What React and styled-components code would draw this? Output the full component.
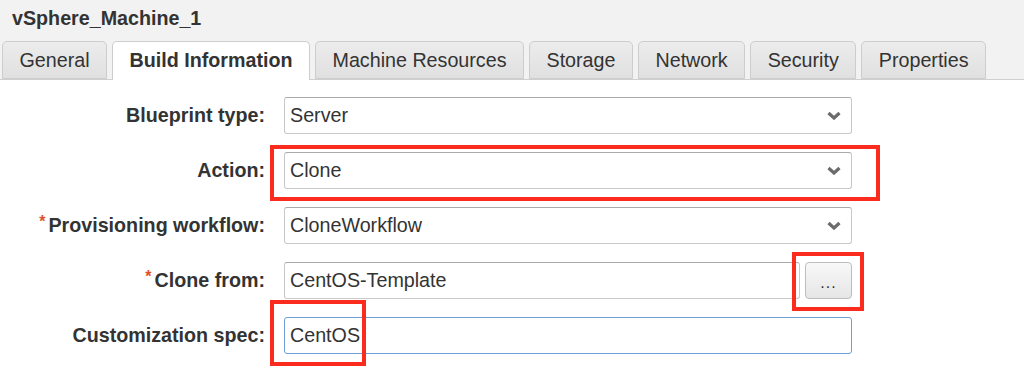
import React from 'react'
import styled, { createGlobalStyle } from 'styled-components'

const GlobalStyle = createGlobalStyle`
  html, body {
    margin: 0;
    padding: 0;
    background: #fff;
  }
  body {
    font-family: "Liberation Sans", Arial, Helvetica, sans-serif;
    color: #333;
  }
`

const Page = styled.div`
  width: 1024px;
  height: 385px;
  overflow: hidden;
  background: #fff;
`

const Header = styled.div`
  background: #f2f2f2;
  border-bottom: 1px solid #cfcfcf;
`

const Title = styled.h1`
  margin: 0;
  padding: 0 12px;
  height: 41px;
  line-height: 36px;
  font-size: 19.7px;
  font-weight: bold;
  color: #333;
`

const Tabs = styled.div`
  display: flex;
  gap: 5px;
  padding-left: 2px;
  height: 38px;
  align-items: flex-end;
`

const Tab = styled.div`
  box-sizing: border-box;
  height: ${p => (p.$active ? '39px' : '38px')};
  margin-bottom: ${p => (p.$active ? '-1px' : '0')};
  padding: 0 16.5px;
  display: flex;
  align-items: center;
  padding-bottom: ${p => (p.$active ? '1px' : '0')};
  font-size: 19.7px;
  font-weight: ${p => (p.$active ? 'bold' : 'normal')};
  color: #333;
  border: 1px solid #cdcdcd;
  border-bottom: ${p => (p.$active ? 'none' : '1px solid #cdcdcd')};
  border-radius: 5px 5px 0 0;
  background: ${p => (p.$active ? '#fff' : 'linear-gradient(#ececec, #e0e0e0)')};
  white-space: nowrap;
`

const Form = styled.div`
  display: grid;
  grid-template-columns: 265px 568px;
  column-gap: 19px;
  row-gap: 18px;
  padding-top: 17px;
`

const Label = styled.div`
  display: flex;
  align-items: center;
  justify-content: flex-end;
  height: 37px;
  font-size: 19.7px;
  font-weight: bold;
  color: #333;
  white-space: nowrap;
`

const Star = styled.span`
  color: #de5228;
  font-size: 16px;
  font-weight: bold;
  margin-right: 3px;
  position: relative;
  top: -4px;
`

const Field = styled.div`
  position: relative;
  display: flex;
  gap: 5px;
`

const Box = styled.div`
  box-sizing: border-box;
  flex: 1;
  height: 37px;
  display: flex;
  align-items: center;
  justify-content: space-between;
  padding: 0 10px 0 5px;
  font-size: 19.7px;
  color: #333;
  background: #fff;
  border: 1px solid ${p => (p.$focus ? '#6f9fd8' : '#c9c9c9')};
  border-top-color: ${p => (p.$focus ? '#6f9fd8' : '#aaaaaa')};
  border-radius: 3px;
`

const Chevron = styled.svg`
  width: 14px;
  height: 9px;
`

const Browse = styled.div`
  box-sizing: border-box;
  width: 47px;
  height: 37px;
  display: flex;
  align-items: center;
  justify-content: center;
  padding-top: 4px;
  font-size: 16px;
  color: #333;
  letter-spacing: 1px;
  border: 1px solid #bdbdbd;
  border-radius: 4px;
  background: linear-gradient(#f8f8f8, #e6e6e6);
`

const Highlight = styled.div`
  position: absolute;
  box-sizing: border-box;
  left: ${p => p.$left}px;
  top: ${p => p.$top}px;
  width: ${p => p.$width}px;
  height: ${p => p.$height}px;
  border: 4px solid #fb2b1e;
  pointer-events: none;
`

const ButtonWrap = styled.div`
  position: relative;
`

function Select({ value }) {
  return (
    <Box>
      <span>{value}</span>
      <Chevron viewBox="0 0 14 9">
        <path d="M1.5 2 L7 7 L12.5 2" fill="none" stroke="#6b6b6b" strokeWidth="3.2" />
      </Chevron>
    </Box>
  )
}

const tabs = ['General', 'Build Information', 'Machine Resources', 'Storage', 'Network', 'Security', 'Properties']

export default function App() {
  return (
    <Page>
      <GlobalStyle />
      <Header>
        <Title>vSphere_Machine_1</Title>
        <Tabs>
          {tabs.map(t => (
            <Tab key={t} $active={t === 'Build Information'}>{t}</Tab>
          ))}
        </Tabs>
      </Header>
      <Form>
        <Label>Blueprint type:</Label>
        <Field>
          <Select value="Server" />
        </Field>

        <Label>Action:</Label>
        <Field>
          <Select value="Clone" />
          <Highlight $left={-14} $top={-7} $width={610} $height={56} />
        </Field>

        <Label><Star>*</Star>Provisioning workflow:</Label>
        <Field>
          <Select value="CloneWorkflow" />
        </Field>

        <Label><Star>*</Star>Clone from:</Label>
        <Field>
          <Box>CentOS-Template</Box>
          <ButtonWrap>
            <Browse>...</Browse>
            <Highlight $left={-13} $top={-10} $width={72} $height={59} />
          </ButtonWrap>
        </Field>

        <Label>Customization spec:</Label>
        <Field>
          <Box $focus>CentOS</Box>
          <Highlight $left={-14} $top={-17} $width={96} $height={66} />
        </Field>
      </Form>
    </Page>
  )
}
